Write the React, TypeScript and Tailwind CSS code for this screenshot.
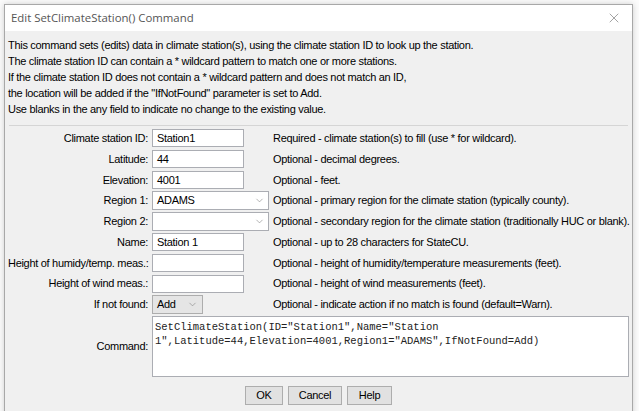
import { ChevronDown, X } from "lucide-react";

const intro = [
  "This command sets (edits) data in climate station(s), using the climate station ID to look up the station.",
  "The climate station ID can contain a * wildcard pattern to match one or more stations.",
  "If the climate station ID does not contain a * wildcard pattern and does not match an ID,",
  'the location will be added if the "IfNotFound" parameter is set to Add.',
  "Use blanks in the any field to indicate no change to the existing value.",
];

type Row = {
  label: string;
  kind: "text" | "combo" | "small";
  value: string;
  note: string;
};

const rows: Row[] = [
  { label: "Climate station ID:", kind: "text", value: "Station1", note: "Required - climate station(s) to fill (use * for wildcard)." },
  { label: "Latitude:", kind: "text", value: "44", note: "Optional - decimal degrees." },
  { label: "Elevation:", kind: "text", value: "4001", note: "Optional - feet." },
  { label: "Region 1:", kind: "combo", value: "ADAMS", note: "Optional - primary region for the climate station (typically county)." },
  { label: "Region 2:", kind: "combo", value: "", note: "Optional - secondary region for the climate station (traditionally HUC or blank)." },
  { label: "Name:", kind: "text", value: "Station 1", note: "Optional - up to 28 characters for StateCU." },
  { label: "Height of humidy/temp. meas.:", kind: "text", value: "", note: "Optional - height of humidity/temperature measurements (feet)." },
  { label: "Height of wind meas.:", kind: "text", value: "", note: "Optional - height of wind measurements (feet)." },
  { label: "If not found:", kind: "small", value: "Add", note: "Optional - indicate action if no match is found (default=Warn)." },
];

function Field({ row }: { row: Row }) {
  if (row.kind === "text") {
    return (
      <div className="w-[92px] h-[18px] bg-white border border-[#abadb3] flex items-center pl-[4px]">
        {row.value}
      </div>
    );
  }
  if (row.kind === "combo") {
    return (
      <div className="w-[117px] h-[19px] bg-white border border-[#abadb3] flex items-center justify-between pl-[4px] pr-[3px]">
        <span>{row.value}</span>
        <ChevronDown size={11} strokeWidth={1.2} className="text-[#777]" />
      </div>
    );
  }
  return (
    <div className="w-[51px] h-[19px] bg-[#e5e5e5] border border-[#adadad] flex items-center justify-between pl-[4px] pr-[4px]">
      <span>{row.value}</span>
      <ChevronDown size={11} strokeWidth={1.2} className="text-[#777]" />
    </div>
  );
}

export default function App() {
  return (
    <div
      className="w-[639px] h-[411px] bg-[#fbfbfb] overflow-hidden text-[11px] tracking-[-0.3px] text-black"
      style={{ fontFamily: '"Liberation Sans", Arial, sans-serif' }}
    >
      <div className="ml-[4px] mt-[4px] w-[629px] h-[420px] border border-[#a8a8a8] shadow-[0_0_6px_rgba(0,0,0,0.18)] flex flex-col">
        {/* Title bar */}
        <div className="h-[26px] bg-white flex items-center justify-between pl-[6px] pr-[10px]">
          <span
            className="text-[11.4px] tracking-normal text-[#555]"
            style={{ fontFamily: '"Open Sans", "Noto Sans", sans-serif' }}
          >
            Edit SetClimateStation() Command
          </span>
          <X size={16} strokeWidth={0.9} className="text-[#666]" />
        </div>

        <div className="flex-1 bg-[#f0f0f0] px-[3px]">
          {/* Intro */}
          <div className="pt-[6px] pb-[8px] leading-[16px]">
            {intro.map((line) => (
              <div key={line}>{line}</div>
            ))}
          </div>

          <div className="h-[2px] border-t border-[#d5d5d5] border-b-white mx-[1px]" />

          {/* Form */}
          <div className="pt-[1px]">
            {rows.map((row) => (
              <div key={row.label} className="h-[20.75px] flex items-center">
                <div className="w-[144px] shrink-0 text-right pr-[4px] whitespace-nowrap">{row.label}</div>
                <div className="w-[118px] shrink-0 flex items-center">
                  <Field row={row} />
                </div>
                <div className="pl-[3px] whitespace-nowrap">{row.note}</div>
              </div>
            ))}

            <div className="flex items-center mt-[1px]">
              <div className="w-[144px] shrink-0 text-right pr-[4px]">Command:</div>
              <div
                className="w-[478px] h-[61px] bg-white border border-[#abadb3] px-[2px] pt-[3px] text-[10.5px] tracking-normal leading-[14px] text-[#222]"
                style={{ fontFamily: '"Liberation Mono", "Courier New", monospace' }}
              >
                <div>SetClimateStation(ID="Station1",Name="Station</div>
                <div>1",Latitude=44,Elevation=4001,Region1="ADAMS",IfNotFound=Add)</div>
              </div>
            </div>

            <div className="flex justify-center gap-[5px] mt-[9px]">
              <button className="w-[38px] h-[19px] bg-[#e1e1e1] border border-[#adadad] leading-none">OK</button>
              <button className="w-[54px] h-[19px] bg-[#e1e1e1] border border-[#adadad] leading-none">Cancel</button>
              <button className="w-[45px] h-[19px] bg-[#e1e1e1] border border-[#adadad] leading-none">Help</button>
            </div>
          </div>
        </div>
      </div>
    </div>
  );
}
